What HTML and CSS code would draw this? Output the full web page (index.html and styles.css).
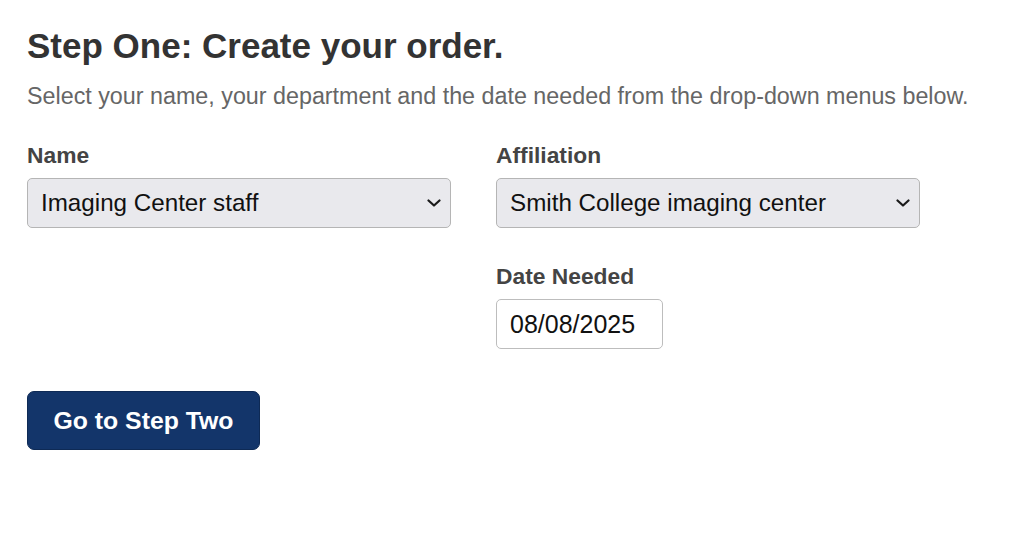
FILE: index.html
```html
<!DOCTYPE html>
<html>
<head>
<meta charset="utf-8">
<link rel="stylesheet" href="styles.css">
</head>
<body>
<main class="page">
  <h1 class="title">Step One: Create your order.</h1>
  <p class="intro">Select your name, your department and the date needed from the drop-down menus below.</p>
  <div class="grid">
    <div class="field">
      <label class="label">Name</label>
      <div class="select"><span>Imaging Center staff</span>
        <svg class="chev" viewBox="0 0 14 8" width="14" height="8"><path d="M1.5 1.5 L7 6.5 L12.5 1.5" fill="none" stroke="#1a1a1a" stroke-width="2.2" stroke-linecap="round" stroke-linejoin="round"/></svg>
      </div>
    </div>
    <div class="field">
      <label class="label">Affiliation</label>
      <div class="select"><span>Smith College imaging center</span>
        <svg class="chev" viewBox="0 0 14 8" width="14" height="8"><path d="M1.5 1.5 L7 6.5 L12.5 1.5" fill="none" stroke="#1a1a1a" stroke-width="2.2" stroke-linecap="round" stroke-linejoin="round"/></svg>
      </div>
    </div>
    <div class="field"></div>
    <div class="field">
      <label class="label">Date Needed</label>
      <div class="date">08/08/2025</div>
    </div>
  </div>
  <button class="btn">Go to Step Two</button>
</main>
</body>
</html>
```
FILE: styles.css
```css
* { box-sizing: border-box; }
body {
  margin: 0;
  background: #fff;
  font-family: "Liberation Sans", Arial, sans-serif;
}
.page {
  padding: 26px 27px 0 27px;
}
.title {
  margin: 0;
  font-size: 35px;
  font-weight: bold;
  color: #333;
  line-height: 40px;
}
.intro {
  margin: 16px 0 0 0;
  font-size: 23.3px;
  color: #666;
  line-height: 28px;
}
.grid {
  display: grid;
  grid-template-columns: 424px 424px;
  column-gap: 45px;
  row-gap: 36px;
  margin-top: 33px;
}
.field {
  display: flex;
  flex-direction: column;
}
.label {
  font-size: 22.8px;
  font-weight: bold;
  color: #444;
  line-height: 24px;
  margin-bottom: 11px;
}
.select {
  height: 50px;
  border: 1px solid #b5b5b5;
  border-radius: 5px;
  background: #e9e9ed;
  display: flex;
  align-items: center;
  justify-content: space-between;
  padding: 0 9px 0 13px;
  font-size: 24.2px;
  color: #111;
}
.date {
  width: 167px;
  height: 50px;
  border: 1px solid #bdbdbd;
  border-radius: 5px;
  background: #fff;
  display: flex;
  align-items: center;
  padding: 0 13px;
  font-size: 25px;
  color: #111;
}
.btn {
  margin-top: 42px;
  width: 233px;
  height: 59px;
  border: 1px solid #0e2a55;
  border-radius: 7px;
  background: #13356a;
  color: #fff;
  font-family: "Liberation Sans", Arial, sans-serif;
  font-size: 24.8px;
  font-weight: bold;
  padding: 0;
}
```
